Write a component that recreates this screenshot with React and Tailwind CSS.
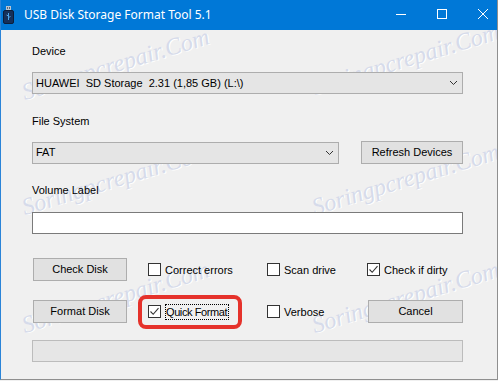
import React from 'react';

const ui = { fontFamily: '"Liberation Sans", Arial, sans-serif' };

function Check({ checked, label, focus }) {
  return (
    <div className="flex items-center gap-[4px] h-[23px]">
      <span className="w-[13px] h-[13px] bg-white border border-[#333333] flex items-center justify-center shrink-0">
        {checked && (
          <svg width="11" height="11" viewBox="0 0 11 11">
            <path d="M1.5 5.5 L4.2 8.3 L9.5 2.2" fill="none" stroke="#333333" strokeWidth="1.1" />
          </svg>
        )}
      </span>
      <span
        className={
          focus
            ? 'border border-dotted border-black leading-[14px] tracking-[-0.4px] pr-[1px]'
            : 'leading-[14px]'
        }
      >
        {label}
      </span>
    </div>
  );
}

function Btn({ children, className = '' }) {
  return (
    <div className={`h-[23px] bg-[#e1e1e1] border border-[#adadad] flex items-center justify-center ${className}`}>
      {children}
    </div>
  );
}

function Select({ value, className = '' }) {
  return (
    <div className={`h-[22px] bg-[#e5e5e5] border border-[#adadad] flex items-center justify-between pl-[3px] pr-[4px] ${className}`}>
      <span className="whitespace-pre">{value}</span>
      <svg width="9" height="6" viewBox="0 0 9 6">
        <path d="M1 1 L4.5 4.5 L8 1" fill="none" stroke="#333" strokeWidth="1" />
      </svg>
    </div>
  );
}

const marks = [
  [25, 70], [315, 65], [25, 185], [315, 185], [25, 303], [315, 303],
];

export default function App() {
  return (
    <div className="w-[498px] h-[381px] bg-[#f0f0f0] overflow-hidden">
      <div className="w-[498px] h-[380px] flex flex-col border-l border-l-[#2a84d8] border-r border-r-[#8f8f8f] border-b border-b-[#8f8f8f] bg-[#f0f0f0]">
        {/* title bar */}
        <div className="h-[30px] bg-[#0078d7] flex items-center pl-[2px] shrink-0">
          <svg width="11" height="18" viewBox="0 0 11 18" className="mb-[1px]">
            <rect x="3" y="0" width="5" height="5" fill="#b8c4d0" />
            <rect x="4" y="1" width="1" height="2" fill="#5a6a7a" />
            <rect x="6" y="1" width="1" height="2" fill="#5a6a7a" />
            <rect x="0.5" y="4.5" width="10" height="13" rx="1.5" fill="#16305a" stroke="#0c1d3a" />
            <path d="M5.5 7 V14 M5.5 10 L3.5 9 M5.5 11.5 L7.5 10.5" stroke="#4fa3e8" strokeWidth="1" fill="none" />
          </svg>
          <span className="ml-[10px] text-white text-[12px] leading-none" style={{ fontFamily: '"Noto Sans", "Open Sans", sans-serif' }}>
            USB Disk Storage Format Tool 5.1
          </span>
          <div className="ml-auto flex gap-[31px] pr-[9px] self-start mt-[9px]">
            <svg width="10" height="10" viewBox="0 0 10 10">
              <path d="M0 5.5 H10" stroke="white" strokeWidth="1" />
            </svg>
            <svg width="10" height="10" viewBox="0 0 10 10">
              <rect x="0.5" y="0.5" width="9" height="9" fill="none" stroke="white" strokeWidth="1" />
            </svg>
            <svg width="10" height="10" viewBox="0 0 10 10">
              <path d="M0 0 L10 10 M10 0 L0 10" stroke="white" strokeWidth="1" />
            </svg>
          </div>
        </div>

        {/* body */}
        <div className="relative flex-1 overflow-hidden text-[11px] text-black" style={ui}>
          {/* watermark, drawn under the controls */}
          {marks.map(([x, y], i) => (
            <span
              key={i}
              className="absolute pointer-events-none whitespace-nowrap italic text-[24px] leading-none text-[#d6dbea] origin-bottom-left -rotate-[17deg]"
              style={{ left: x, top: y - 20, fontFamily: '"Liberation Serif", serif', textShadow: '1px 1px 0 #fff' }}
            >
              Soringpcrepair.Com
            </span>
          ))}

          <div className="relative flex flex-col pl-[31px] w-[462px]">
            <div className="mt-[15px] h-[13px] leading-[13px]">Device</div>
            <Select className="mt-[14px] w-[431px]" value="HUAWEI  SD Storage  2.31 (1,85 GB) (L:\)" />

            <div className="mt-[21px] h-[13px] leading-[13px]">File System</div>
            <div className="mt-[13px] flex items-center justify-between w-[431px]">
              <Select className="w-[307px]" value="FAT" />
              <Btn className="w-[102px]">Refresh Devices</Btn>
            </div>

            <div className="mt-[20px] h-[13px] leading-[13px]">Volume Label</div>
            <div className="mt-[15px] h-[22px] w-[431px] bg-white border border-[#7a7a7a]" />

            <div className="mt-[24px] grid grid-cols-[116px_119px_100px_96px] items-center">
              <Btn className="ml-[1px] w-[94px]">Check Disk</Btn>
              <Check label="Correct errors" />
              <Check label="Scan drive" />
              <Check checked label="Check if dirty" />
            </div>

            <div className="mt-[19px] grid grid-cols-[116px_119px_100px_96px] items-center">
              <Btn className="ml-[1px] w-[94px]">Format Disk</Btn>
              <Check checked focus label="Quick Format" />
              <Check label="Verbose" />
              <Btn className="ml-[1px] w-[95px]">Cancel</Btn>
            </div>

            <div className="mt-[17px] h-[22px] w-[431px] bg-[#e6e6e6] border border-[#bcbcbc]" />
          </div>

          {/* highlight annotation */}
          <div className="absolute left-[137px] top-[265px] w-[104px] h-[34px] border-[4px] border-[#e5322b] rounded-[8px] pointer-events-none" />
        </div>
      </div>
    </div>
  );
}
